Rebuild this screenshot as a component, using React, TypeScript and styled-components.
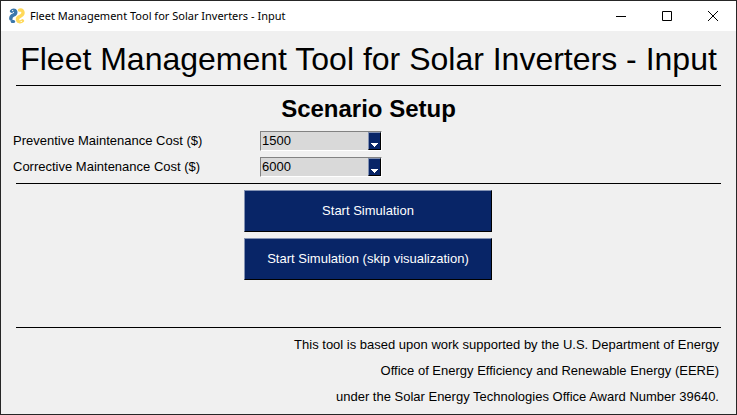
import React, { useState } from "react";
import styled, { createGlobalStyle } from "styled-components";

const navy = "#082567";
const face = "#f0f0f0";

const GlobalStyle = createGlobalStyle`
  *, *::before, *::after { box-sizing: border-box; }
  body {
    margin: 0;
    background: ${face};
    color: #000;
    font-family: "Liberation Sans", Arial, sans-serif;
    font-size: 13px;
  }
`;

const Window = styled.div`
  display: flex;
  flex-direction: column;
  min-height: 100vh;
  border: 1px solid #262626;
  background: ${face};
`;

const TitleBar = styled.header`
  display: flex;
  align-items: center;
  height: 30px;
  padding-left: 8px;
  background: #fff;
`;

const WindowTitle = styled.span`
  flex: 1;
  margin-left: 5px;
  font-family: "Noto Sans", "Segoe UI", sans-serif;
  font-size: 11px;
  line-height: 16px;
  white-space: nowrap;
`;

const WindowButton = styled.button`
  display: flex;
  align-items: center;
  justify-content: center;
  width: 46px;
  height: 30px;
  padding: 0;
  border: 0;
  background: transparent;
`;

const Content = styled.main`
  display: flex;
  flex-direction: column;
  flex: 1;
  padding: 6px 15px 0;
`;

const Heading = styled.h1`
  margin: 0;
  padding-bottom: 4px;
  font-size: 32px;
  font-weight: 400;
  line-height: 44px;
  text-align: center;
  white-space: nowrap;
`;

const Rule = styled.hr`
  width: 100%;
  height: 1px;
  margin: 0;
  border: 0;
  background: #000;
`;

const SectionTitle = styled.h2`
  margin: 8px 0 7px;
  font-size: 24px;
  font-weight: 700;
  line-height: 30px;
  text-align: center;
`;

const Fields = styled.div`
  display: grid;
  grid-template-columns: 247px 122px;
  row-gap: 6px;
  margin: 0 -3px 6px;
`;

const Label = styled.label`
  font-size: 13px;
  line-height: 20px;
`;

const ComboFrame = styled.div`
  display: grid;
  grid-template-columns: 1fr 13px;
  height: 20px;
  border: 1px solid;
  border-color: #828282 #fff #fff #828282;
  background: #d9d9d9;
`;

const ComboSelect = styled.select`
  grid-area: 1 / 1 / 2 / 3;
  appearance: none;
  width: 100%;
  height: 18px;
  padding: 0 14px 0 1px;
  border: 0;
  border-radius: 0;
  background: transparent;
  color: #000;
  font: 13px/18px "Liberation Sans", Arial, sans-serif;
`;

const ComboArrow = styled.span`
  grid-area: 1 / 2 / 2 / 3;
  display: flex;
  align-items: flex-end;
  justify-content: center;
  padding-bottom: 2px;
  border: 1px solid;
  border-color: #8392b3 #000 #000 #8392b3;
  background: ${navy};
  pointer-events: none;
`;

const Actions = styled.div`
  display: flex;
  flex-direction: column;
  align-items: center;
  gap: 6px;
  margin: 6px 0 47px;
  padding-right: 1px;
`;

const ActionButton = styled.button`
  width: 248px;
  height: 42px;
  padding: 0;
  border: 1px solid;
  border-color: #8392b3 #000 #000 #8392b3;
  border-radius: 0;
  background: ${navy};
  color: #fff;
  font: 13px/20px "Liberation Sans", Arial, sans-serif;
`;

const Credits = styled.footer`
  display: flex;
  flex-direction: column;
  gap: 6px;
  padding: 7px 2px 7px;
  text-align: right;
`;

const CreditLine = styled.p`
  margin: 0;
  font-size: 13px;
  line-height: 20px;
`;

const AppIcon = () => (
  <svg width="16" height="16" viewBox="0 0 16 16" fill="none" strokeLinecap="round" strokeLinejoin="round" aria-hidden="true">
    <path d="M2.600 3.200C3.600 1.700 6 1.700 6.600 3.300C7.200 5.300 6 6.400 4.300 7.100C2.400 7.900 1.600 9 1.900 11" stroke="#3b77ab" strokeWidth="3.400" />
    <path d="M3.200 13.500H4.600" stroke="#3b77ab" strokeWidth="3" />
    <path d="M10.600 2.100C13 1.600 14.200 3 14 5.200C13.800 7.200 12.200 7.900 10.600 8.600C8.900 9.300 8.200 10.800 8.700 12.400C9.300 14.200 12 14.300 13.400 12.900" stroke="#ffd95a" strokeWidth="3.400" />
    <circle cx="3.600" cy="2.600" r=".7" fill="#fff" />
    <circle cx="12.200" cy="13.400" r=".7" fill="#fff" />
  </svg>
);

const MinimizeIcon = () => (
  <svg width="10" height="10" viewBox="0 0 10 10" shapeRendering="crispEdges" aria-hidden="true">
    <path d="M0 5h10v1H0z" />
  </svg>
);

const MaximizeIcon = () => (
  <svg width="10" height="10" viewBox="0 0 10 10" fill="none" stroke="#000" aria-hidden="true">
    <path d="M.5.5h9v9h-9z" />
  </svg>
);

const CloseIcon = () => (
  <svg width="10" height="10" viewBox="0 0 10 10" fill="none" stroke="#000" aria-hidden="true">
    <path d="M0 0l10 10M10 0L0 10" />
  </svg>
);

const ArrowIcon = () => (
  <svg width="7" height="4" viewBox="0 0 7 4" fill="#fff" shapeRendering="crispEdges" aria-hidden="true">
    <path d="M0 0h7v1H0zM1 1h5v1H1zM2 2h3v1H2zM3 3h1v1H3z" />
  </svg>
);

type CostFieldProps = { id: string; label: string; initial: string; options: string[] };

const CostField = ({ id, label, initial, options }: CostFieldProps) => {
  const [value, setValue] = useState(initial);
  return (
    <>
      <Label htmlFor={id}>{label}</Label>
      <ComboFrame>
        <ComboSelect id={id} value={value} onChange={(e) => setValue(e.target.value)}>
          {options.map((option) => (
            <option key={option}>{option}</option>
          ))}
        </ComboSelect>
        <ComboArrow>
          <ArrowIcon />
        </ComboArrow>
      </ComboFrame>
    </>
  );
};

export default function App() {
  return (
    <>
      <GlobalStyle />
      <Window>
        <TitleBar>
          <AppIcon />
          <WindowTitle>Fleet Management Tool for Solar Inverters - Input</WindowTitle>
          <WindowButton type="button" aria-label="Minimize">
            <MinimizeIcon />
          </WindowButton>
          <WindowButton type="button" aria-label="Maximize">
            <MaximizeIcon />
          </WindowButton>
          <WindowButton type="button" aria-label="Close">
            <CloseIcon />
          </WindowButton>
        </TitleBar>
        <Content>
          <Heading>Fleet Management Tool for Solar Inverters - Input</Heading>
          <Rule />
          <SectionTitle>Scenario Setup</SectionTitle>
          <Fields>
            <CostField id="preventive" label="Preventive Maintenance Cost ($)" initial="1500" options={["1500"]} />
            <CostField id="corrective" label="Corrective Maintenance Cost ($)" initial="6000" options={["6000"]} />
          </Fields>
          <Rule />
          <Actions>
            <ActionButton type="button">Start Simulation</ActionButton>
            <ActionButton type="button">Start Simulation (skip visualization)</ActionButton>
          </Actions>
          <Rule />
          <Credits>
            <CreditLine>This tool is based upon work supported by the U.S. Department of Energy</CreditLine>
            <CreditLine>Office of Energy Efficiency and Renewable Energy (EERE)</CreditLine>
            <CreditLine>under the Solar Energy Technologies Office Award Number 39640.</CreditLine>
          </Credits>
        </Content>
      </Window>
    </>
  );
}
